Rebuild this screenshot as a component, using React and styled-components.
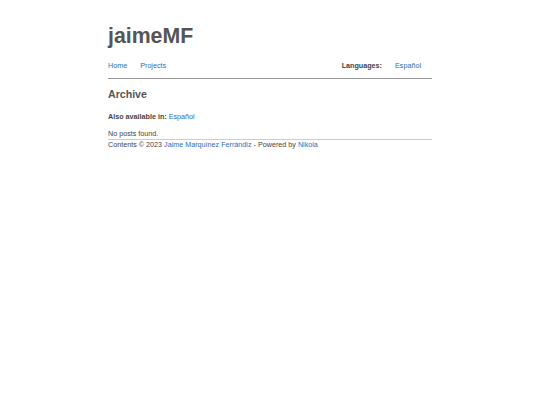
import React from "react";
import styled, { createGlobalStyle } from "styled-components";

const GlobalStyle = createGlobalStyle`
  html, body {
    margin: 0;
    padding: 0;
    background: #fff;
  }
  body {
    font-family: "Liberation Sans", Arial, sans-serif;
    color: #444;
  }
`;

const Page = styled.div`
  width: 324px;
  margin: 0 auto;
  padding-top: 22px;
`;

const Title = styled.h1`
  margin: 0;
  font-size: 21.3px;
  font-weight: bold;
  color: #555;
  line-height: 28px;
`;

const Nav = styled.nav`
  display: flex;
  align-items: center;
  padding: 11px 11px 8px 0;
  border-bottom: 1px solid #999;
  font-size: 7.2px;
`;

const NavList = styled.div`
  display: flex;
  gap: 13px;
  flex: 1;
`;

const Link = styled.a`
  color: #2a6ebb;
  text-decoration: none;
`;

const LangLabel = styled.span`
  font-weight: bold;
  color: #444;
  margin-right: 13px;
`;

const Heading = styled.h2`
  margin: 9px 0 0;
  font-size: 10.6px;
  font-weight: bold;
  color: #555;
`;

const Small = styled.p`
  margin: ${(p) => p.$mt || 0}px 0 0;
  font-size: 7.2px;
  color: #444;
`;

const Bold = styled.span`
  font-weight: bold;
`;

const Footer = styled.footer`
  border-top: 1px solid #ccc;
  margin-top: 1px;
  font-size: 7.2px;
  color: #444;
`;

export default function App() {
  return (
    <>
      <GlobalStyle />
      <Page>
        <Title>jaimeMF</Title>
        <Nav>
          <NavList>
            <Link href="#">Home</Link>
            <Link href="#">Projects</Link>
          </NavList>
          <LangLabel>Languages:</LangLabel>
          <Link href="#">Español</Link>
        </Nav>
        <Heading>Archive</Heading>
        <Small $mt={12}>
          <Bold>Also available in:</Bold> <Link href="#">Español</Link>
        </Small>
        <Small $mt={8}>No posts found.</Small>
        <Footer>
          Contents © 2023 <Link href="#">Jaime Marquínez Ferrándiz</Link> - Powered by{" "}
          <Link href="#">Nikola</Link>
        </Footer>
      </Page>
    </>
  );
}
